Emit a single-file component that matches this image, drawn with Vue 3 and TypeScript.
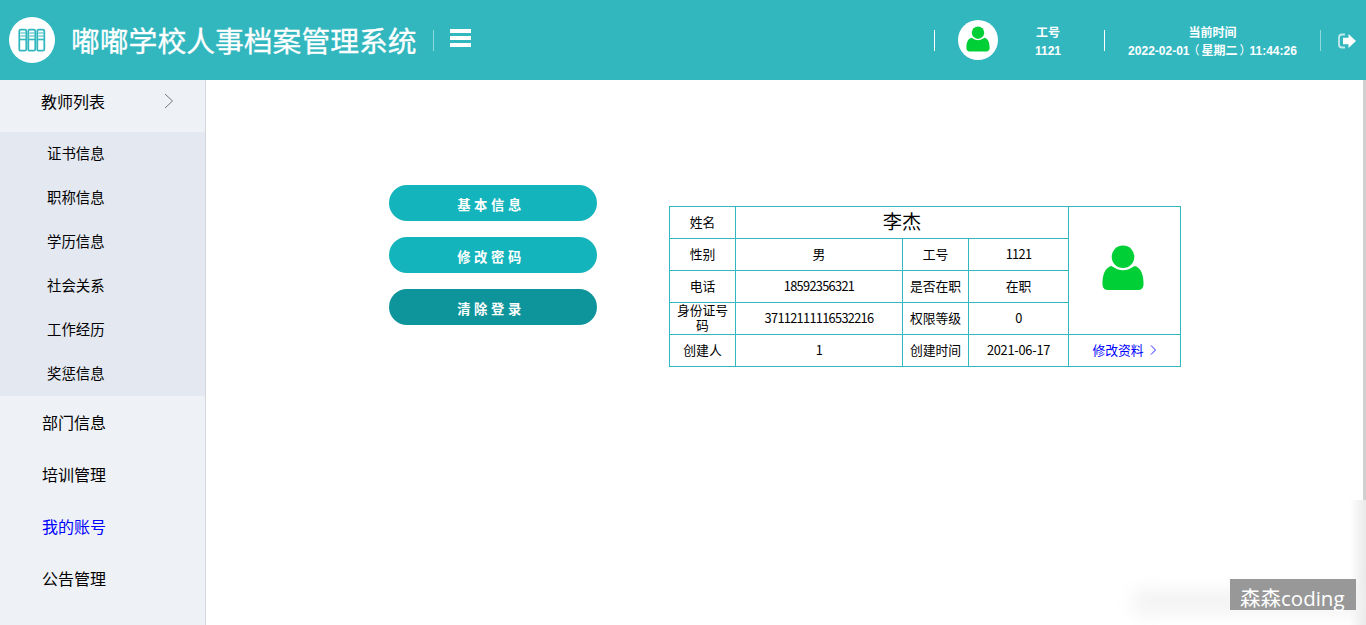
<script setup lang="ts">
interface Cell {
  text: string
  kind?: 'name' | 'num' | 'date' | 'link' | 'avatar' | 'tall'
}

const title = '嘟嘟学校人事档案管理系统'
const subItems: string[] = ['证书信息', '职称信息', '学历信息', '社会关系', '工作经历', '奖惩信息']
const menuItems: { text: string; active?: boolean }[] = [
  { text: '部门信息' },
  { text: '培训管理' },
  { text: '我的账号', active: true },
  { text: '公告管理' },
]
const actions: { text: string; dark?: boolean }[] = [
  { text: '基本信息' },
  { text: '修改密码' },
  { text: '清除登录', dark: true },
]
const cells: Cell[] = [
  { text: '姓名' }, { text: '李杰', kind: 'name' }, { text: '', kind: 'avatar' },
  { text: '性别' }, { text: '男' }, { text: '工号' }, { text: '1121', kind: 'num' },
  { text: '电话' }, { text: '18592356321', kind: 'num' }, { text: '是否在职' }, { text: '在职' },
  { text: '身份证号码', kind: 'tall' }, { text: '37112111116532216', kind: 'num' }, { text: '权限等级' }, { text: '0', kind: 'num' },
  { text: '创建人' }, { text: '1', kind: 'num' }, { text: '创建时间' }, { text: '2021-06-17', kind: 'date' },
  { text: '修改资料', kind: 'link' },
]
</script>

<template>
  <div class="page">
    <header class="header">
      <div class="logo">
        <svg width="28" height="26" viewBox="0 0 28 26" fill="none" stroke="#32b7bf">
          <g v-for="n in 3" :key="n" :transform="`translate(${(n - 1) * 9} 0)`">
            <rect x="1.300" y="2.700" width="7" height="21" rx="1.500" stroke-width="1.8" />
            <path d="M2.500 6h5M2.500 9h5" stroke-width="1.2" />
            <path d="M2 12.500h6" stroke-width="1.6" />
          </g>
        </svg>
      </div>
      <h1 class="title">{{ title }}</h1>
      <i class="sep soft"></i>
      <div class="burger"><i></i><i></i><i></i></div>
      <div class="right">
        <i class="sep"></i>
        <div class="avatar">
          <svg width="24" height="26" viewBox="0 0 42 46">
            <circle cx="21" cy="11.8" r="11" fill="#00cf35" />
            <path d="M9.500 21Q21 29.500 32.500 21C39 22 42 31 41.500 40Q41 45 36 45H6Q1 45 .5 40C0 31 3 22 9.500 21Z" fill="#00cf35" />
          </svg>
        </div>
        <div class="info id"><span>工号</span><span>1121</span></div>
        <i class="sep"></i>
        <div class="info time"><span>当前时间</span><span>2022-02-01<b class="paren start">（</b>星期二<b class="paren end">）</b>11:44:26</span></div>
        <i class="sep soft"></i>
        <svg class="exit" width="18" height="16" viewBox="0 0 18 16">
          <path d="M7 1.500H4Q1 1.500 1 4.500V11.500Q1 14.500 4 14.500H7" fill="none" stroke="#c4eaec" stroke-width="1.8" />
          <path d="M5 4.800h5.500V1L18 8l-7.500 7V11.200H5Z" fill="#fff" />
        </svg>
      </div>
    </header>

    <div class="body">
      <aside class="sidebar">
        <div class="group">
          <span>教师列表</span>
          <svg width="10" height="16" viewBox="0 0 10 16" fill="none" stroke="#777"><path d="M1 1l7.500 7L1 15" /></svg>
        </div>
        <ul class="sub">
          <li v-for="s in subItems" :key="s">{{ s }}</li>
        </ul>
        <ul class="menu">
          <li v-for="m in menuItems" :key="m.text" :class="{ active: m.active }">{{ m.text }}</li>
        </ul>
      </aside>

      <main class="main">
        <div class="actions">
          <button v-for="a in actions" :key="a.text" :class="{ dark: a.dark }">{{ a.text }}</button>
        </div>
        <div class="card">
          <div v-for="(c, i) in cells" :key="i" class="cell" :class="c.kind">
            <svg v-if="c.kind === 'avatar'" width="42" height="46" viewBox="0 0 42 46">
              <circle cx="21" cy="11.800" r="11.300" fill="#00cf35" />
              <path d="M9.500 21Q21 29.500 32.500 21C39 22 42 31 41.500 40Q41 45 36 45H6Q1 45 .5 40C0 31 3 22 9.500 21Z" fill="#00cf35" />
            </svg>
            <template v-else>{{ c.text }}</template>
            <svg v-if="c.kind === 'link'" width="7" height="10" viewBox="0 0 7 10" fill="none" stroke="#22f"><path d="M1 .5L5.500 5L1 9.500" /></svg>
          </div>
        </div>
      </main>
      <div class="scroll"></div>
    </div>

    <div class="edge-shade"></div>
    <div class="haze"></div>
    <div class="mark">森森coding</div>
  </div>
</template>

<style>
body {
  margin: 0;
  overflow: hidden;
}
</style>

<style scoped>
.page {
  position: relative;
  width: 1366px;
  height: 625px;
  overflow: hidden;
  background: #fff;
  color: #000;
  font-family: "Noto Sans CJK SC", sans-serif;
}
ul {
  list-style: none;
  margin: 0;
  padding: 0;
}
.header {
  display: flex;
  align-items: center;
  box-sizing: border-box;
  height: 80px;
  padding-left: 9px;
  background: #32b7bf;
  color: #fff;
}
.logo {
  display: flex;
  align-items: center;
  justify-content: center;
  width: 46px;
  height: 46px;
  border-radius: 50%;
  background: #fff;
}
.title {
  margin: 0 16px 0 16px;
  font-size: 28.8px;
  font-weight: 400;
  line-height: 80px;
  white-space: nowrap;
  -webkit-text-stroke: 0.3px #fff;
}
.sep {
  width: 1px;
  height: 21px;
  background: #fff;
}
.sep.soft {
  background: #8fd8dc;
}
.burger {
  display: flex;
  flex-direction: column;
  gap: 3px;
  width: 21px;
  margin: -4px 0 0 16px;
}
.burger i {
  height: 4px;
  background: #fff;
}
.right {
  display: flex;
  align-items: center;
  margin-left: auto;
  padding-right: 10px;
}
.avatar {
  display: flex;
  align-items: center;
  justify-content: center;
  width: 40px;
  height: 40px;
  margin-left: 23px;
  border-radius: 50%;
  background: #fff;
}
.avatar svg {
  margin: -3px 1px 0 0;
}
.info {
  display: flex;
  flex-direction: column;
  align-items: center;
  font: bold 12px/18px "Liberation Sans", "Noto Sans CJK SC", sans-serif;
  padding-top: 3px;
  white-space: nowrap;
}
.info.id {
  width: 100px;
  margin-right: 6px;
}
.info.time {
  width: 215px;
}
.paren {
  display: inline-block;
  width: 12px;
  font-weight: 400;
}
.paren.start {
  text-indent: -2px;
}
.paren.end {
  text-indent: 2px;
}
.exit {
  margin: 1px 0 0 17px;
}
.body {
  display: flex;
  height: 545px;
}
.sidebar {
  box-sizing: border-box;
  width: 206px;
  border-right: 1px solid #d3d6da;
  background: #eef1f6;
  font-size: 16px;
}
.group {
  display: flex;
  justify-content: space-between;
  align-items: center;
  box-sizing: border-box;
  height: 52px;
  padding: 0 31px 11px 41px;
}
.sub {
  background: #e4e8f1;
  font-size: 14.4px;
}
.sub li {
  height: 44px;
  padding-left: 47px;
  line-height: 42px;
}
.menu li {
  height: 52px;
  padding-left: 42px;
  line-height: 53px;
}
.menu .active {
  color: #00f;
}
.main {
  display: flex;
  flex: 1;
  align-items: flex-start;
  gap: 72px;
  padding: 105px 0 0 183px;
}
.actions {
  display: flex;
  flex-direction: column;
  gap: 16px;
}
.actions button {
  width: 208px;
  height: 36px;
  padding: 4px 4px 0 0;
  border: 0;
  border-radius: 18px;
  background: #13b4bc;
  color: #fff;
  font: bold 13.3px/32px "Noto Sans CJK SC", sans-serif;
  letter-spacing: 3.6px;
}
.actions .dark {
  background: #0e959b;
}
.card {
  display: grid;
  grid-template-columns: 66px 167px 66px 100px 112px;
  grid-auto-rows: 32px;
  margin-top: 21px;
  border: solid #32b7bf;
  border-width: 1px 0 0 1px;
  font-size: 12.8px;
}
.cell {
  display: flex;
  align-items: center;
  justify-content: center;
  box-sizing: border-box;
  padding-bottom: 2px;
  border: solid #32b7bf;
  border-width: 0 1px 1px 0;
  line-height: 15px;
  text-align: center;
}
.cell.name {
  grid-column: span 3;
  font-size: 19.2px;
}
.cell.avatar {
  grid-area: 1 / 5 / 5 / 6;
  width: auto;
  height: auto;
  margin: 0;
  padding: 0;
  border-radius: 0;
}
.cell.avatar svg {
  margin: -6px 3px 0 0;
}
.cell.num {
  letter-spacing: -0.7px;
}
.cell.date {
  letter-spacing: -0.25px;
}
.cell.tall {
  padding: 0 6px 3px;
}
.cell.link {
  gap: 6px;
  color: #00f;
}
.scroll {
  width: 3px;
  height: 420px;
  background: #d0d0d0;
}
.edge-shade {
  position: absolute;
  right: 0;
  bottom: 0;
  width: 16px;
  height: 125px;
  background: linear-gradient(to right, #fff, #e9e9e9);
}
.haze {
  position: absolute;
  left: 1134px;
  top: 592px;
  width: 236px;
  height: 20px;
  background: #f0f0f0;
  filter: blur(10px);
}
.mark {
  position: absolute;
  left: 1230px;
  top: 579px;
  box-sizing: border-box;
  width: 126px;
  height: 31px;
  padding-left: 10px;
  background: #989898;
  color: #fff;
  font: 20.5px/39px "Open Sans", "Noto Sans CJK SC", sans-serif;
  white-space: nowrap;
}
</style>
